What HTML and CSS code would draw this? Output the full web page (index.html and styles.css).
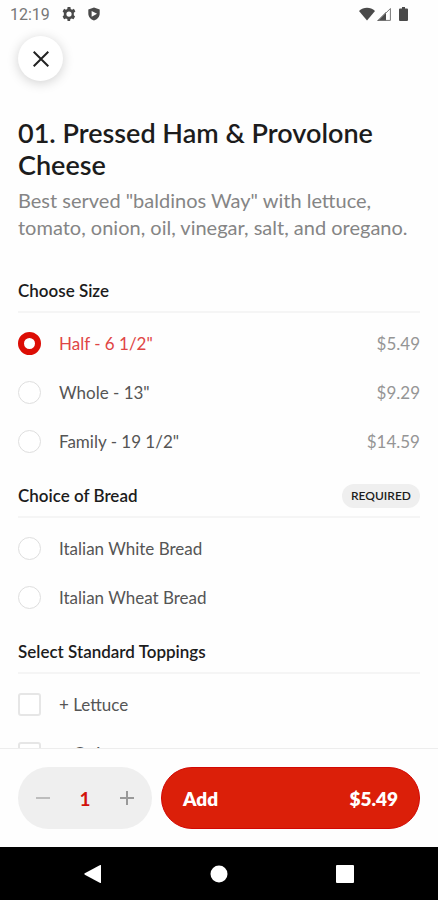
FILE: index.html
```html
<!DOCTYPE html>
<html lang="en">
<head>
<meta charset="utf-8">
<meta name="viewport" content="width=device-width, initial-scale=1">
<title>Pressed Ham &amp; Provolone Cheese</title>
<link rel="stylesheet" href="styles.css">
</head>
<body>
<div class="app">
  <div class="status">
    <span class="time">12:19</span>
    <svg class="status-icon gear" viewBox="0 0 16 16" aria-hidden="true"><path fill-rule="evenodd" d="M6.400 0h3.200l.4 2.200 1.500.8 2.100-.9 1.700 3L13.500 6.700v2.600l1.400 1.600-1.700 3-2.100-.9-1.500.8-.4 2.200H6.400L6 13.800 4.500 13l-2.100.9-1.700-3 1.400-1.600V6.700L.7 5.100l1.700-3 2.100.9L6 2.200zM8 5a3 3 0 1 0 0 6 3 3 0 0 0 0-6z"/></svg>
    <svg class="status-icon shield" viewBox="0 0 16 16" aria-hidden="true"><path fill-rule="evenodd" d="M8 .5l6.500 2.300v4.700c0 3.800-2.700 6.800-6.500 8-3.800-1.200-6.500-4.200-6.500-8V2.800zM5.300 4.500v6.500L11.500 7.700z"/></svg>
    <span class="spacer"></span>
    <svg class="status-icon wifi" viewBox="0 0 16 13" aria-hidden="true"><path d="M0 3.500C4.600-.7 11.400-.7 16 3.500L8 13z"/></svg>
    <svg class="status-icon signal" viewBox="0 0 14 14" aria-hidden="true"><path d="M0 14L9 5v9z"/><path class="outline" d="M1.500 13.400L13.400 1.500v11.900z"/></svg>
    <svg class="status-icon battery" viewBox="0 0 9 14" aria-hidden="true"><path d="M3 0h3v1.500h2q1 0 1 1V13q0 1-1 1H1q-1 0-1-1V2.500q0-1 1-1h2z"/></svg>
  </div>

  <main class="content">
    <button class="close" type="button" aria-label="Close"><svg viewBox="0 0 16 16" aria-hidden="true"><path d="M.7.700l14.600 14.600M15.300.700L.7 15.300"/></svg></button>
    <h1>01. Pressed Ham &amp; Provolone Cheese</h1>
    <p class="description">Best served "baldinos Way" with lettuce, tomato, onion, oil, vinegar, salt, and oregano.</p>

    <section aria-labelledby="size">
      <div class="heading"><h2 id="size">Choose Size</h2></div>
      <label class="option"><input type="radio" name="size" checked><span class="name">Half - 6 1/2"</span><span class="price">$5.49</span></label>
      <label class="option"><input type="radio" name="size"><span class="name">Whole - 13"</span><span class="price">$9.29</span></label>
      <label class="option"><input type="radio" name="size"><span class="name">Family - 19 1/2"</span><span class="price">$14.59</span></label>
    </section>

    <section aria-labelledby="bread">
      <div class="heading"><h2 id="bread">Choice of Bread</h2><span class="tag">REQUIRED</span></div>
      <label class="option"><input type="radio" name="bread"><span class="name">Italian White Bread</span></label>
      <label class="option"><input type="radio" name="bread"><span class="name">Italian Wheat Bread</span></label>
    </section>

    <section aria-labelledby="toppings">
      <div class="heading"><h2 id="toppings">Select Standard Toppings</h2></div>
      <label class="option"><input type="checkbox"><span class="name">+ Lettuce</span></label>
      <label class="option"><input type="checkbox"><span class="name">+ Onion</span></label>
    </section>
  </main>

  <footer class="order">
    <div class="stepper">
      <button class="minus" type="button" aria-label="Decrease quantity"><svg viewBox="0 0 14 14" aria-hidden="true"><path d="M0 7h14"/></svg></button>
      <output>1</output>
      <button class="plus" type="button" aria-label="Increase quantity"><svg viewBox="0 0 14 14" aria-hidden="true"><path d="M0 7h14M7 0v14"/></svg></button>
    </div>
    <button class="add" type="button"><span>Add</span><span>$5.49</span></button>
  </footer>

  <nav class="system" aria-label="System">
    <button type="button" aria-label="Back"><svg viewBox="0 0 18 18" aria-hidden="true"><path d="M17 .5v17q0 .8-.8.400L.8 9.700q-1-.7 0-1.400L16.200.1q.8-.4.8.4z"/></svg></button>
    <button type="button" aria-label="Home"><svg viewBox="0 0 18 18" aria-hidden="true"><circle cx="9" cy="9" r="8.500"/></svg></button>
    <button type="button" aria-label="Recent apps"><svg viewBox="0 0 18 18" aria-hidden="true"><rect width="18" height="18" rx="1"/></svg></button>
  </nav>
</div>
</body>
</html>
```

FILE: styles.css
```css
* {
  box-sizing: border-box;
}

body {
  margin: 0;
  background: #fefefe;
  color: #1c1c1c;
  font-family: Lato, "Liberation Sans", sans-serif;
  font-size: 17px;
}

button {
  border: 0;
  padding: 0;
  background: none;
  color: inherit;
  font: inherit;
}

h1,
h2,
p {
  margin: 0;
}

.app {
  display: flex;
  flex-direction: column;
  height: 100vh;
}

.status {
  display: flex;
  flex: none;
  align-items: center;
  height: 28px;
  padding: 0 30px 0 10px;
  color: #777;
  font-family: Roboto, sans-serif;
  font-size: 16px;
}

.status-icon {
  height: 14px;
  fill: #4a4a4a;
}

.gear {
  width: 14px;
  margin-left: 12px;
}

.shield {
  width: 14px;
  margin-left: 11px;
}

.spacer {
  flex: 1;
}

.wifi {
  width: 16px;
}

.signal {
  width: 14px;
  margin-left: 2px;
}

.signal .outline {
  fill: none;
  stroke: #777;
}

.battery {
  width: 9px;
  margin-left: 8px;
}

.content {
  flex: 1;
  min-height: 0;
  overflow: hidden;
  padding: 8px 18px 0;
}

.close {
  display: grid;
  place-items: center;
  width: 45px;
  height: 45px;
  margin-bottom: 36px;
  border-radius: 50%;
  background: #fff;
  box-shadow: 0 2px 12px rgb(0 0 0 / 18%);
}

.close svg {
  width: 16px;
  height: 16px;
  stroke: #222;
  stroke-width: 2;
}

h1 {
  font-size: 27px;
  font-weight: 600;
  line-height: 32px;
}

.description {
  margin-top: 6px;
  margin-bottom: 20px;
  color: #858585;
  font-size: 20px;
  line-height: 27px;
}

.heading {
  display: flex;
  align-items: center;
  justify-content: space-between;
  height: 52px;
  margin-bottom: 6px;
  padding: 18px 0 8px;
  border-bottom: 2px solid #f5f5f5;
}

h2 {
  font-size: 17px;
  font-weight: 600;
  line-height: 24px;
}

.tag {
  padding: 0 9px;
  border-radius: 12px;
  background: #efefef;
  font-size: 12px;
  font-weight: 600;
  line-height: 24px;
}

.option {
  display: flex;
  align-items: center;
  height: 49px;
  color: #555;
  line-height: 20px;
}

.option input {
  appearance: none;
  flex: none;
  width: 23px;
  height: 23px;
  margin: 0 18px 0 0;
  border: 1px solid #dedede;
  background: #fff;
}

.option input[type="radio"] {
  border-radius: 50%;
}

.option input[type="checkbox"] {
  border-width: 2px;
  border-color: #e6e6e6;
  border-radius: 3px;
}

.option input:checked {
  border: 6px solid #dc0d05;
}

.option input:checked + .name {
  color: #e04545;
}

.name {
  flex: 1;
}

.price {
  color: #959595;
}

.order {
  display: flex;
  flex: none;
  gap: 9px;
  padding: 18px;
  border-top: 1px solid #ededed;
  background: #fefefe;
}

.stepper {
  display: flex;
  align-items: center;
  justify-content: space-between;
  width: 134px;
  height: 62px;
  padding: 0 18px;
  border-radius: 31px;
  background: #efefef;
}

.stepper svg {
  display: block;
  width: 14px;
  height: 14px;
  stroke-width: 2;
}

.minus {
  stroke: #bdbdbd;
}

.plus {
  stroke: #999;
}

.stepper output {
  color: #d2120b;
  font-size: 19px;
  font-weight: 700;
}

.add {
  display: flex;
  flex: 1;
  align-items: center;
  justify-content: space-between;
  padding: 0 21px;
  border: 1px solid #d20804;
  border-radius: 31px;
  background: #db1f09;
  color: #fff;
  font-size: 19px;
  font-weight: 800;
}

.system {
  display: flex;
  flex: none;
  align-items: center;
  justify-content: center;
  gap: 108px;
  height: 53px;
  background: #000;
}

.system svg {
  display: block;
  width: 18px;
  height: 18px;
  fill: #fff;
}
```
